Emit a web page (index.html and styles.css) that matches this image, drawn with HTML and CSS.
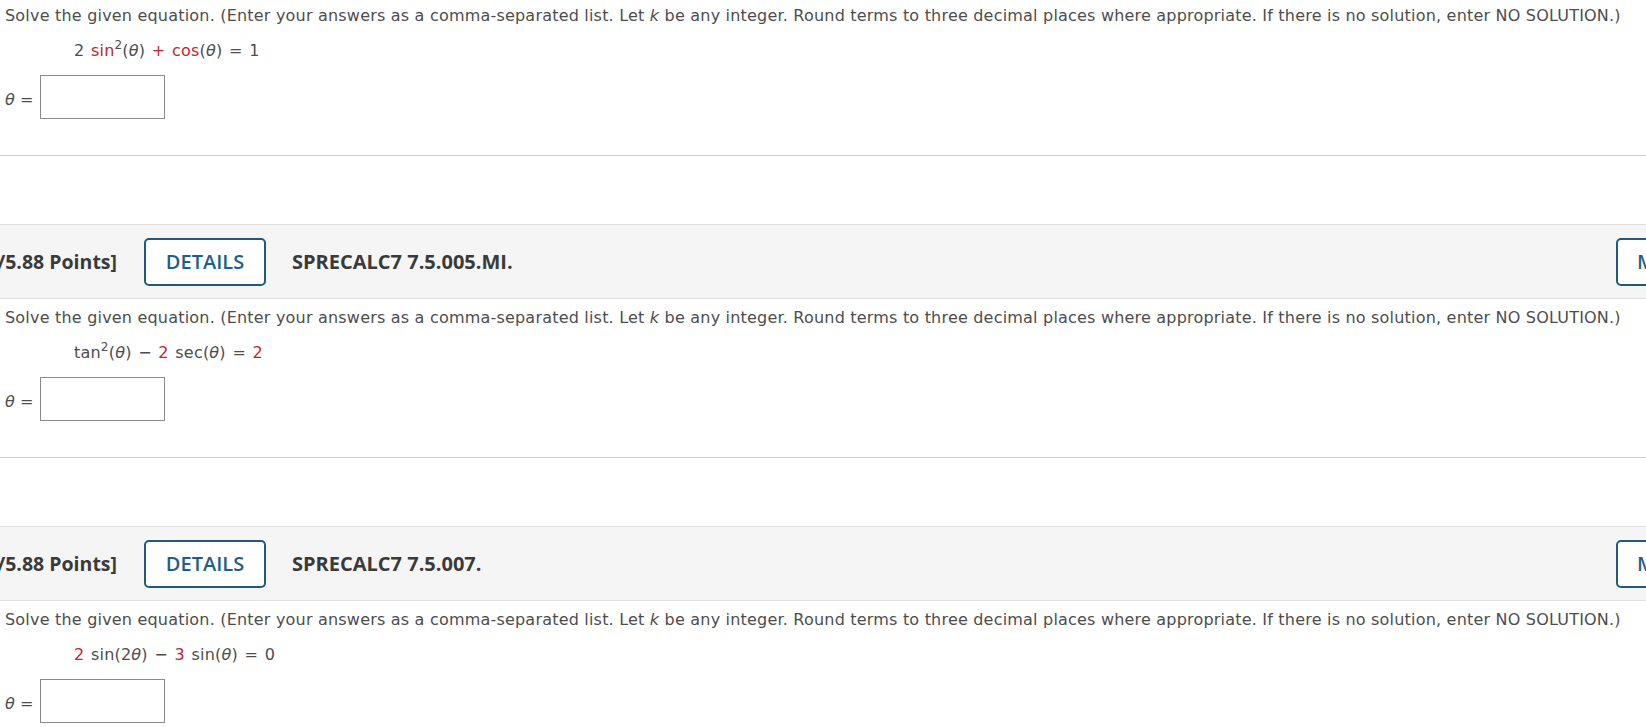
FILE: index.html
```html
<!DOCTYPE html>
<html>
<head>
<meta charset="utf-8">
<link rel="stylesheet" href="styles.css">
</head>
<body>
<div class="page">
  <section class="question">
    <div class="qbody first">
      <p class="prompt">Solve the given equation. (Enter your answers as a comma-separated list. Let <i>k</i> be any integer. Round terms to three decimal places where appropriate. If there is no solution, enter NO SOLUTION.)</p>
      <p class="eq">2 <span class="r">sin</span><sup>2</sup>(<i>θ</i>) <span class="r">+</span> <span class="r">cos</span>(<i>θ</i>) = 1</p>
      <div class="answer"><span class="lbl"><i>θ</i> =</span><span class="box"></span></div>
    </div>
    <hr class="sep">
  </section>

  <section class="question">
    <div class="band">
      <div class="points"><span>[-/5.88 Points]</span></div>
      <button class="details">DETAILS</button>
      <span class="code">SPRECALC7 7.5.005.MI.</span>
      <button class="notes">MY NOTES</button>
    </div>
    <div class="qbody">
      <p class="prompt">Solve the given equation. (Enter your answers as a comma-separated list. Let <i>k</i> be any integer. Round terms to three decimal places where appropriate. If there is no solution, enter NO SOLUTION.)</p>
      <p class="eq">tan<sup>2</sup>(<i>θ</i>) − <span class="r">2</span> sec(<i>θ</i>) = <span class="r">2</span></p>
      <div class="answer"><span class="lbl"><i>θ</i> =</span><span class="box"></span></div>
    </div>
    <hr class="sep">
  </section>

  <section class="question">
    <div class="band">
      <div class="points"><span>[-/5.88 Points]</span></div>
      <button class="details">DETAILS</button>
      <span class="code">SPRECALC7 7.5.007.</span>
      <button class="notes">MY NOTES</button>
    </div>
    <div class="qbody">
      <p class="prompt">Solve the given equation. (Enter your answers as a comma-separated list. Let <i>k</i> be any integer. Round terms to three decimal places where appropriate. If there is no solution, enter NO SOLUTION.)</p>
      <p class="eq"><span class="r">2</span> sin(2<i>θ</i>) − <span class="r">3</span> sin(<i>θ</i>) = 0</p>
      <div class="answer"><span class="lbl"><i>θ</i> =</span><span class="box"></span></div>
    </div>
  </section>
</div>
</body>
</html>
```

FILE: styles.css
```css
html, body {
  margin: 0;
  padding: 0;
  background: #ffffff;
  overflow: hidden;
}
body {
  font-family: "DejaVu Sans", Verdana, sans-serif;
  color: #4d4d4d;
}
.page {
  display: flex;
  flex-direction: column;
  width: 1646px;
}
.question {
  display: flex;
  flex-direction: column;
}
.qbody {
  display: flex;
  flex-direction: column;
  padding: 9px 0 0 5px;
}
.qbody.first {
  padding-top: 6px;
}
.prompt {
  margin: 0;
  font-size: 16px;
  letter-spacing: 0.2px;
  line-height: 20px;
  white-space: nowrap;
}
.eq {
  margin: 15px 0 0 69px;
  font-size: 16px;
  letter-spacing: 0.2px;
  word-spacing: 1.3px;
  line-height: 20px;
  white-space: pre;
}
.eq sup {
  font-size: 12px;
  line-height: 0;
  vertical-align: 7px;
}
.r {
  color: #c0272d;
}
.answer {
  display: flex;
  align-items: center;
  gap: 9px;
  margin-top: 14px;
}
.lbl {
  font-size: 16px;
  line-height: 20px;
  width: 26px;
  margin-top: 6px;
  white-space: nowrap;
}
.box {
  width: 123px;
  height: 42px;
  border: 1px solid #8a8a8a;
  background: #fff;
}
.sep {
  margin: 36px 0 0 0;
  border: 0;
  border-top: 1px solid #cfcfcf;
  height: 0;
}
.band {
  margin-top: 68px;
  height: 73px;
  background: #f5f5f5;
  border-top: 1px solid #e0e0e0;
  border-bottom: 1px solid #e0e0e0;
  display: flex;
  align-items: center;
  gap: 27px;
  font-family: "Open Sans", "Noto Sans", sans-serif;
}
.points {
  width: 117px;
  flex-shrink: 0;
  display: flex;
  justify-content: flex-end;
  white-space: nowrap;
  font-size: 19.5px;
  font-weight: 700;
  color: #3a3a3a;
}
.details, .notes {
  flex-shrink: 0;
  height: 48px;
  background: #ffffff;
  border: 2px solid #1f5a7e;
  border-radius: 5px;
  color: #1f5f86;
  font-family: "Open Sans", "Noto Sans", sans-serif;
  font-size: 20px;
  font-weight: 600;
  padding: 0;
}
.details {
  width: 122px;
}
.code {
  margin-left: -1px;
  font-size: 20px;
  font-weight: 700;
  color: #3a3a3a;
  white-space: nowrap;
}
.notes {
  margin-left: auto;
  width: 130px;
  margin-right: -100px;
  text-align: left;
  padding-left: 19px;
}
```
